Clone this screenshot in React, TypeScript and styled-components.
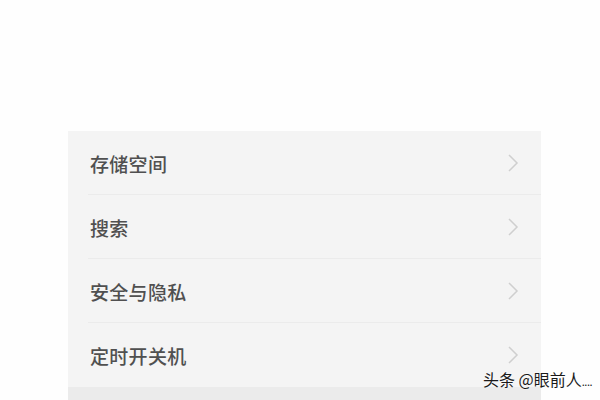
import React from 'react';
import styled, { createGlobalStyle } from 'styled-components';

const GlobalStyle = createGlobalStyle`
  html, body {
    margin: 0;
    padding: 0;
    background: #fefefe;
    font-family: "Noto Sans CJK SC", "Noto Sans", sans-serif;
  }
`;

const Page = styled.div`
  position: relative;
  width: 600px;
  height: 400px;
  overflow: hidden;
  padding-top: 131px;
  box-sizing: border-box;
`;

const Panel = styled.div`
  width: 473px;
  margin-left: 68px;
  background: #f4f4f4;
  display: flex;
  flex-direction: column;
`;

const Row = styled.div<{ $last?: boolean }>`
  height: 64px;
  display: flex;
  align-items: center;
  justify-content: space-between;
  padding: 0 22px 0 22px;
  position: relative;

  &::after {
    content: '';
    display: ${(p) => (p.$last ? 'none' : 'block')};
    position: absolute;
    left: 20px;
    right: 0;
    bottom: 0;
    height: 1px;
    background: #ebebeb;
  }
`;

const Label = styled.span`
  font-size: 19px;
  font-weight: 500;
  color: #505050;
  letter-spacing: 0.3px;
`;

const Footer = styled.div`
  height: 20px;
  background: #ebebeb;
`;

const Watermark = styled.div`
  position: absolute;
  right: 8px;
  bottom: 9px;
  font-size: 16px;
  color: #1a1a1a;
  text-shadow: 0 0 2px #fff;
`;

const Dots = styled.span`
  font-size: 11px;
  letter-spacing: -0.5px;
`;

const Chevron = () => (
  <svg width="12" height="20" viewBox="0 0 12 20">
    <path d="M2 2 L10 10 L2 18" fill="none" stroke="#cfcfcf" strokeWidth="1.5" />
  </svg>
);

const items = ['存储空间', '搜索', '安全与隐私', '定时开关机'];

const App = () => (
  <Page>
    <GlobalStyle />
    <Panel>
      {items.map((t, i) => (
        <Row key={t} $last={i === items.length - 1}>
          <Label>{t}</Label>
          <Chevron />
        </Row>
      ))}
      <Footer />
    </Panel>
    <Watermark>
      头条 @眼前人<Dots>....</Dots>
    </Watermark>
  </Page>
);

export default App;
